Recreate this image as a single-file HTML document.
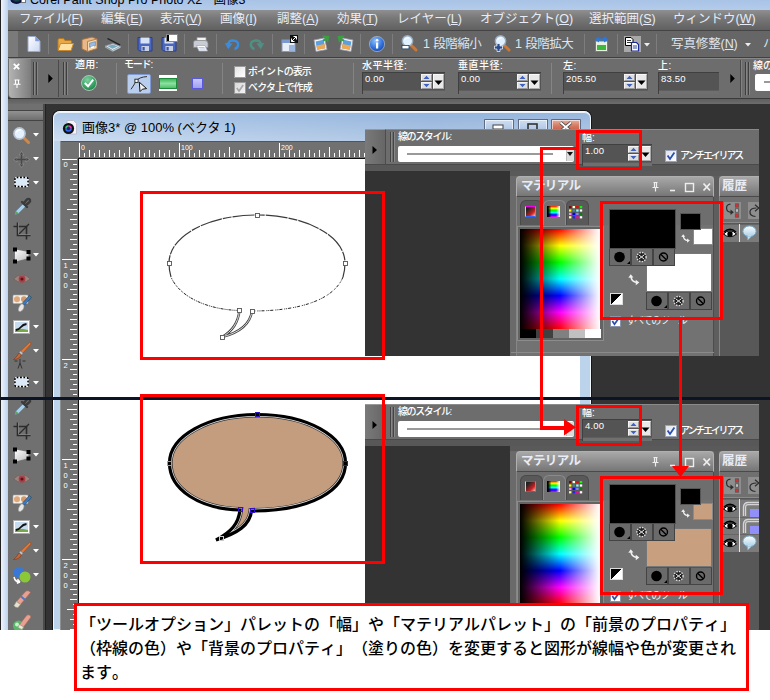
<!DOCTYPE html>
<html lang="ja"><head><meta charset="utf-8"><title>PSP</title>
<style>
html,body{margin:0;padding:0;background:#fff}
#r{position:relative;width:770px;height:700px;overflow:hidden;background:#fff;font-family:"Liberation Sans","Noto Sans CJK JP",sans-serif}
#r div{position:absolute;box-sizing:border-box}
#r svg{position:absolute;overflow:visible}
.t{white-space:nowrap;font-size:12px;line-height:20px;color:#dfe4ee}
.menu{font-size:12.5px;color:#e8ecf6}
.cap{text-spacing-trim:space-all;font-kerning:none;font-feature-settings:"palt" 0,"chws" 0,"halt" 0;white-space:nowrap;font-size:16px;line-height:24.3px;color:#000;font-weight:500;font-family:"Liberation Sans","Noto Sans CJK JP",sans-serif}
.s{white-space:nowrap;font-size:10px;line-height:12px;color:#f0f0f0}
.o{color:#fff;font-weight:500}
</style></head><body><div id="r">
<div style="left:0px;top:0px;width:770px;height:630px;background:#333333"></div>
<div style="left:0px;top:0px;width:770px;height:10px;background:linear-gradient(#a9c3e6,#b4cceb)"></div>
<div class="t" style="left:30px;top:-10px;font-size:12.5px;color:#000">Corel Paint Shop Pro Photo X2 <span style="opacity:0">-</span> 画像3</div>
<div style="left:10px;top:-8px;width:13px;height:12px;background:radial-gradient(circle at 50% 40%,#2a4,#114 60%,#000);border-radius:50%"></div>
<div style="left:21px;top:0px;width:5px;height:3px;background:#fff;border:1px solid #777;border-top:0"></div>
<div style="left:8px;top:10px;width:762px;height:20px;background:linear-gradient(#8f8f8f,#787878 40%,#606060)"></div>
<div class="t menu" style="left:19px;top:9px;letter-spacing:-0.35px">ファイル(<u>F</u>)</div>
<div class="t menu" style="left:101px;top:9px;">編集(<u>E</u>)</div>
<div class="t menu" style="left:160px;top:9px;">表示(<u>V</u>)</div>
<div class="t menu" style="left:220px;top:9px;">画像(<u>I</u>)</div>
<div class="t menu" style="left:277px;top:9px;">調整(<u>A</u>)</div>
<div class="t menu" style="left:337px;top:9px;">効果(<u>T</u>)</div>
<div class="t menu" style="left:397px;top:9px;">レイヤー(<u>L</u>)</div>
<div class="t menu" style="left:480px;top:9px;">オブジェクト(<u>O</u>)</div>
<div class="t menu" style="left:589px;top:9px;">選択範囲(<u>S</u>)</div>
<div class="t menu" style="left:673px;top:9px;">ウィンドウ(<u>W</u>)</div>
<div style="left:8px;top:30px;width:762px;height:28px;background:#666;border-top:1px solid #444;border-bottom:1px solid #404040;box-sizing:border-box"></div>
<div style="left:8px;top:31px;width:10px;height:26px;background:#7a7a7a"></div>
<div style="left:48px;top:34px;width:1px;height:20px;background:#7d7d7d"></div>
<div style="left:128px;top:34px;width:1px;height:20px;background:#7d7d7d"></div>
<div style="left:184px;top:34px;width:1px;height:20px;background:#7d7d7d"></div>
<div style="left:216px;top:34px;width:1px;height:20px;background:#7d7d7d"></div>
<div style="left:272px;top:34px;width:1px;height:20px;background:#7d7d7d"></div>
<div style="left:304px;top:34px;width:1px;height:20px;background:#7d7d7d"></div>
<div style="left:360px;top:34px;width:1px;height:20px;background:#7d7d7d"></div>
<div style="left:392px;top:34px;width:1px;height:20px;background:#7d7d7d"></div>
<div style="left:584px;top:34px;width:1px;height:20px;background:#7d7d7d"></div>
<div style="left:617px;top:34px;width:1px;height:20px;background:#7d7d7d"></div>
<div style="left:656px;top:34px;width:1px;height:20px;background:#7d7d7d"></div>
<svg style="left:27px;top:36px" width="14" height="16"><defs><linearGradient id="gdoc" x1="0" y1="0" x2="1" y2="1"><stop offset="0" stop-color="#fff"/><stop offset="1" stop-color="#c9d6f2"/></linearGradient></defs><path d="M1 0.5 H8.5 L13 5 V15.5 H1Z" fill="url(#gdoc)" stroke="#9aa8cc" stroke-width="1"/><path d="M8.5 0.5 V5 H13Z" fill="#7f9bd8" stroke="#8fa3d0" stroke-width=".6"/></svg>
<svg style="left:57px;top:36px" width="17" height="16"><path d="M1 4 Q1 2.5 2.5 2.5 H6.5 L8 4.5 H13.5 Q14.5 4.5 14.5 5.5 V14 H1Z" fill="#e8a848" stroke="#b87820" stroke-width="1"/><path d="M3.5 7.5 H16.5 L14 14.5 H1Z" fill="#ffe0a0" stroke="#c88830" stroke-width="1"/></svg>
<svg style="left:81px;top:36px" width="17" height="16"><path d="M1 3.5 L11 1 L16 3 V12.5 L6.5 15.5 L1 13Z" fill="#e8b888" stroke="#a87040" stroke-width="1"/><path d="M6.5 5.5 L16 3 V12.5 L6.5 15.5Z" fill="#f6d8b0" stroke="#a87040" stroke-width=".8"/><path d="M8.5 7.2 L14.5 5.6 V9.6 L8.5 11.2Z" fill="#9ab8e0" stroke="#58a" stroke-width=".6"/><path d="M10 10.8 L13 10 V11.5 L10 12.3Z" fill="#fff"/></svg>
<svg style="left:104px;top:36px" width="18" height="16"><path d="M4 2 L16.5 8.5 L15.5 9.5 L3 3Z" fill="#222"/><path d="M1 10 L9 7.5 L16.5 10.5 L8.5 14.5Z" fill="#dfe6ee" stroke="#889" stroke-width=".8"/><path d="M3.5 10 L9 8.4 L13.8 10.4 L8.3 12.8Z" fill="#7ab"/><path d="M1 10 V11.5 L8.5 15.8 V14.5Z" fill="#9aa"/><path d="M8.5 15.8 L16.5 11.8 V10.5 L8.5 14.5Z" fill="#bcc"/></svg>
<svg style="left:137px;top:36px" width="16" height="16"><path d="M1 1.5 H15 V15 H2.5 L1 13.5Z" fill="#4a68c0" stroke="#2a3c88" stroke-width="1"/><rect x="3.5" y="1.5" width="9" height="6" fill="#d8e2f6"/><rect x="4.5" y="10" width="7.5" height="5" fill="#c8d0e4"/><rect x="5.5" y="11" width="2.2" height="3.5" fill="#3a56a8"/></svg>
<svg style="left:161px;top:36px" width="16" height="16"><path d="M1 1.5 H15 V15 H2.5 L1 13.5Z" fill="#4a68c0" stroke="#2a3c88" stroke-width="1"/><rect x="3.5" y="1.5" width="9" height="6" fill="#d8e2f6"/><rect x="4.5" y="10" width="7.5" height="5" fill="#c8d0e4"/><rect x="5.5" y="11" width="2.2" height="3.5" fill="#3a56a8"/></svg>
<div style="left:166px;top:34px;width:12px;height:8px;background:#fff;border:1px solid #888"></div>
<div style="left:167px;top:35px;width:2px;height:6px;background:#000"></div>
<svg style="left:192px;top:36px" width="17" height="16"><path d="M5 1.5 H14 V7 H5Z" fill="#f4f4f4" stroke="#999" stroke-width=".8"/><path d="M1.5 6.5 Q1.5 4.5 3.5 4.5 H13 Q16 4.5 16 7.5 V11.5 H1.5Z" fill="#c8ccd4" stroke="#888" stroke-width=".8"/><path d="M4.5 9.5 H13 L15.5 15 H7Z" fill="#fff" stroke="#aab" stroke-width=".8"/><path d="M6.5 11.5 H12.5 M7.5 13 H13.5" stroke="#9be" stroke-width=".8"/></svg>
<svg style="left:224px;top:36px" width="17" height="16"><path d="M4.5 9 Q4 4.2 9.5 4.4 Q14.8 5 14 9.6 Q13.4 12.4 10.5 13" fill="none" stroke="#3c8cdc" stroke-width="2.5"/><path d="M0.8 7 L8.6 7.6 L4.2 13.2Z" fill="#3c8cdc"/></svg>
<svg style="left:248px;top:36px" width="17" height="16"><path d="M12.5 9 Q13 4.2 7.5 4.4 Q2.2 5 3 9.6 Q3.6 12.4 6.5 13" fill="none" stroke="#4f9084" stroke-width="2.5"/><path d="M16.2 7 L8.4 7.6 L12.8 13.2Z" fill="#4f9084"/></svg>
<svg style="left:281px;top:35px" width="17" height="17"><rect x="1" y="5" width="13" height="11.5" fill="#e8eef8" stroke="#8898b8" stroke-width="1"/><rect x="1" y="5" width="13" height="3" fill="#7a9ad0"/><rect x="8" y="10" width="6" height="6.5" fill="#9ab4dc"/><rect x="9" y="0" width="8" height="8" fill="#111"/><path d="M10.5 6.5 L15.5 1.5 M10.5 3.5 V6.5 H13.5 M12.5 1.5 H15.5 V4.5" stroke="#fff" stroke-width="1" fill="none"/></svg>
<svg style="left:313px;top:35px" width="17" height="17"><g><path d="M1 5 L11.5 3 L14 14.5 L3 16.5Z" fill="#f6f6f6" stroke="#99a" stroke-width=".8"/><path d="M2.6 6.4 L10.6 4.8 L12.3 13.2 L4.2 14.8Z" fill="#5aa0e0"/><path d="M3.4 10.5 L11.5 9 L12.3 13.2 L4.2 14.8Z" fill="#f0a850"/><path d="M9 0.5 L16.5 1 L15 8 L13.3 5.2 L10.5 6.5 L9.5 4.8 L12 3.4Z" fill="#38a040"/></g></svg>
<svg style="left:337px;top:35px" width="17" height="17"><g transform="translate(17 0) scale(-1 1)"><path d="M1 5 L11.5 3 L14 14.5 L3 16.5Z" fill="#f6f6f6" stroke="#99a" stroke-width=".8"/><path d="M2.6 6.4 L10.6 4.8 L12.3 13.2 L4.2 14.8Z" fill="#5aa0e0"/><path d="M3.4 10.5 L11.5 9 L12.3 13.2 L4.2 14.8Z" fill="#f0a850"/><path d="M9 0.5 L16.5 1 L15 8 L13.3 5.2 L10.5 6.5 L9.5 4.8 L12 3.4Z" fill="#38a040"/></g></svg>
<svg style="left:369px;top:36px" width="16" height="16"><defs><radialGradient id="ginfo" cx=".4" cy=".3" r=".8"><stop offset="0" stop-color="#8ec0ff"/><stop offset=".6" stop-color="#2f6fd8"/><stop offset="1" stop-color="#1c3f9c"/></radialGradient></defs><circle cx="8" cy="8" r="7.6" fill="url(#ginfo)" stroke="#bcd" stroke-width=".6"/><rect x="7" y="6.5" width="2.2" height="6" fill="#fff"/><circle cx="8.1" cy="4.2" r="1.3" fill="#fff"/></svg>
<svg style="left:401px;top:35px" width="17" height="18"><path d="M9.5 9.5 L15 15" stroke="#c87838" stroke-width="3" stroke-linecap="round"/><circle cx="6.5" cy="6" r="5.2" fill="#dff0ff" stroke="#9ab" stroke-width="1.4"/><path d="M3.5 5 Q5 2.5 8 2.8" stroke="#fff" stroke-width="1.2" fill="none"/><rect x="1" y="10.5" width="7" height="3.4" fill="#fff" stroke="#246" stroke-width=".8"/></svg>
<svg style="left:494px;top:35px" width="17" height="18"><path d="M9.5 9.5 L15 15" stroke="#c87838" stroke-width="3" stroke-linecap="round"/><circle cx="6.5" cy="6" r="5.2" fill="#dff0ff" stroke="#9ab" stroke-width="1.4"/><path d="M3.5 5 Q5 2.5 8 2.8" stroke="#fff" stroke-width="1.2" fill="none"/><path d="M3 8.5 H6 V11 H8.5 V14 H6 V16.5 H3 V14 H0.5 V11 H3Z" fill="#2a4c90" stroke="#fff" stroke-width=".7"/></svg>
<div class="t" style="left:423px;top:34px;font-size:12.5px;letter-spacing:-0.55px;word-spacing:1px">1 段階縮小</div>
<div class="t" style="left:515px;top:34px;font-size:12.5px;letter-spacing:-0.55px;word-spacing:1px">1 段階拡大</div>
<svg style="left:594px;top:36px" width="16" height="16"><rect x="1.5" y="5" width="12" height="10.5" fill="#e8f0e0" stroke="#686" stroke-width="1"/><rect x="3" y="9" width="9" height="5" fill="#3cb83c"/><path d="M1 3.5 L5 0.5 V2.5 H10 V0.5 L14.5 3.5 L10 6.5 V4.5 H5 V6.5Z" fill="#2a78e0"/></svg>
<div style="left:623.5px;top:35.5px;width:17px;height:16.5px;background:#a8a8a8"></div>
<svg style="left:624px;top:36px" width="16" height="16"><path d="M1.5 1.5 H7 L9 3.5 V9.5 H1.5Z" fill="#fff" stroke="#000" stroke-width="1"/><path d="M3 4.5 H7 M3 6.5 H7" stroke="#000" stroke-width=".8"/><path d="M7.5 6.5 H12.5 L14.5 8.5 V15 H7.5Z" fill="#fff" stroke="#1a2a90" stroke-width="1.2"/><path d="M9 10 H13 M9 12 H13" stroke="#1a2a90" stroke-width=".9"/></svg>
<svg style="left:644px;top:43px" width="6" height="4"><path d="M0 0 H6 L3 3.5Z" fill="#eee"/></svg>
<div class="t" style="left:671px;top:34px;font-size:12.5px;letter-spacing:-0.1px">写真修整(<u>N</u>)</div>
<svg style="left:745px;top:43px" width="6" height="4"><path d="M0 0 H6 L3 3.5Z" fill="#eee"/></svg>
<div class="t" style="left:763px;top:34px;">ハ</div>
<div style="left:8px;top:58px;width:762px;height:41px;background:#6d6d6d;border-top:1px solid #8a8a8a;border-bottom:1px solid #3a3a3a;box-sizing:border-box;border-radius:0 0 0 4px"></div>
<div style="left:9px;top:59px;width:22px;height:39px;background:linear-gradient(90deg,#b4b4b4,#7c7c7c);border-radius:0 0 0 4px"></div>
<div style="left:8px;top:99px;width:762px;height:5px;background:linear-gradient(#5f5f5f,#6c6c6c)"></div>
<svg style="left:13px;top:63px" width="7" height="7"><path d="M0.8 0.8 L6.2 6.2 M6.2 0.8 L0.8 6.2" stroke="#fff" stroke-width="1.8"/></svg>
<svg style="left:13px;top:79px" width="8" height="9"><path d="M1.5 1 H6.5 M2.5 1 V5 M5.5 1 V5 M0.5 5.3 H7.5 M4 5.5 V9" stroke="#fff" stroke-width="1.1" fill="none"/></svg>
<div style="left:33px;top:62px;width:1px;height:33px;background:#3e3e3e"></div>
<div style="left:34px;top:62px;width:1px;height:33px;background:#858585"></div>
<div style="left:36px;top:62px;width:1px;height:33px;background:#3e3e3e"></div>
<div style="left:37px;top:62px;width:1px;height:33px;background:#858585"></div>
<div style="left:63px;top:62px;width:1px;height:33px;background:#3e3e3e"></div>
<div style="left:64px;top:62px;width:1px;height:33px;background:#858585"></div>
<div style="left:66px;top:62px;width:1px;height:33px;background:#3e3e3e"></div>
<div style="left:67px;top:62px;width:1px;height:33px;background:#858585"></div>
<svg style="left:48px;top:74px" width="5" height="9"><path d="M0.3 0 L4.8 4.5 L0.3 9Z" fill="#000"/></svg>
<div style="left:58px;top:60px;width:1px;height:37px;background:#4a4a4a"></div>
<div style="left:116px;top:63px;width:1px;height:31px;background:#858585"></div>
<div style="left:222px;top:63px;width:1px;height:31px;background:#858585"></div>
<div style="left:353px;top:63px;width:1px;height:31px;background:#858585"></div>
<div style="left:551px;top:63px;width:1px;height:31px;background:#858585"></div>
<div class="s o" style="left:75px;top:59.3px;letter-spacing:0.3px">適用:</div>
<svg style="left:81px;top:75px" width="16" height="16"><defs><radialGradient id="gok" cx=".4" cy=".3" r=".8"><stop offset="0" stop-color="#7fd0a0"/><stop offset=".7" stop-color="#2f9a5c"/><stop offset="1" stop-color="#1c6c3c"/></radialGradient></defs><circle cx="8" cy="8" r="7.5" fill="url(#gok)" stroke="#b8d8c4" stroke-width=".8"/><path d="M3.8 8 L7 11.3 L12.2 4.6" fill="none" stroke="#fff" stroke-width="2"/></svg>
<div class="s o" style="left:124px;top:59.3px;letter-spacing:-1.2px">モード:</div>
<div style="left:127px;top:74px;width:24px;height:20px;background:#b9cdec;border:1px solid #7e9ad0;border-radius:2px"></div>
<svg style="left:130px;top:76px" width="18" height="16"><path d="M1 13.3 Q4 9 6.4 4.7 Q9.5 1 17 0.6" fill="none" stroke="#333" stroke-width="1"/><rect x="4.9" y="3.2" width="3.2" height="3.2" fill="#fff" stroke="#222" stroke-width=".9"/><path d="M9.3 6.2 L10 15.6 L12.4 13.2 L16.6 12.6Z" fill="#f4f4f4" stroke="#111" stroke-width="1"/></svg>
<div style="left:159px;top:75px;width:18px;height:16px;background:#fff"></div>
<div style="left:159px;top:77.5px;width:18px;height:11px;background:linear-gradient(#3cb85c,#8ee0a0 50%,#4cc06c);border:1.5px solid #1f8a3c"></div>
<div style="left:192px;top:78px;width:11px;height:11px;background:linear-gradient(#c8c8ff,#a0a0f0);border:1px solid #5a5ad8"></div>
<div style="left:234px;top:66px;width:12px;height:12px;background:linear-gradient(135deg,#e4e4e4,#fff);border:1px solid #9a9a9a"></div>
<div class="s o" style="left:248px;top:66px;letter-spacing:-1.05px">ポイントの表示</div>
<div style="left:234px;top:82px;width:12px;height:12px;background:linear-gradient(135deg,#d8d8d8,#f4f4f4);border:1px solid #9a9a9a"></div>
<svg style="left:234px;top:82px" width="12" height="12"><path d="M2.8 6 L5 9 L9.2 3" fill="none" stroke="#a8a8a8" stroke-width="1.7"/></svg>
<div class="s o" style="left:248px;top:82px;letter-spacing:-0.8px">ベクタ上で作成</div>
<div class="s o" style="left:362px;top:59.8px;letter-spacing:0.5px">水平半径:</div>
<div style="left:362px;top:72px;width:83px;height:22px;background:#545454;border-top:1px solid #404040;border-left:1px solid #404040"></div>
<div style="left:363px;top:90px;width:82px;height:4px;background:#6f6f6f;border-top:1px solid #5e5e5e"></div>
<div class="s" style="left:365px;top:73px;font-size:9.5px;line-height:12px;color:#fff;letter-spacing:0.2px">0.00</div>
<div style="left:421px;top:74.3px;width:11px;height:7px;background:#dedede;border:1px solid #f4f4f4;border-right-color:#9a9a9a;border-bottom-color:#9a9a9a"></div>
<div style="left:421px;top:82.3px;width:11px;height:7px;background:#dedede;border:1px solid #f4f4f4;border-right-color:#9a9a9a;border-bottom-color:#9a9a9a"></div>
<svg style="left:421px;top:74.3px" width="11" height="15"><path d="M2.5 5 L5.5 1.8 L8.5 5Z M2.5 10 L5.5 13.2 L8.5 10Z" fill="#4060c4"/></svg>
<div style="left:433.3px;top:74.0px;width:11px;height:15.3px;background:#e9e9e9;border:1px solid #fafafa;border-right-color:#aaa;border-bottom-color:#aaa"></div>
<svg style="left:433.3px;top:74.3px" width="11" height="15"><path d="M1.5 6.5 L9.5 6.5 L5.5 11Z" fill="#000"/></svg>
<div class="s o" style="left:458px;top:59.8px;letter-spacing:0.5px">垂直半径:</div>
<div style="left:458px;top:72px;width:83px;height:22px;background:#545454;border-top:1px solid #404040;border-left:1px solid #404040"></div>
<div style="left:459px;top:90px;width:82px;height:4px;background:#6f6f6f;border-top:1px solid #5e5e5e"></div>
<div class="s" style="left:461px;top:73px;font-size:9.5px;line-height:12px;color:#fff;letter-spacing:0.2px">0.00</div>
<div style="left:517px;top:74.3px;width:11px;height:7px;background:#dedede;border:1px solid #f4f4f4;border-right-color:#9a9a9a;border-bottom-color:#9a9a9a"></div>
<div style="left:517px;top:82.3px;width:11px;height:7px;background:#dedede;border:1px solid #f4f4f4;border-right-color:#9a9a9a;border-bottom-color:#9a9a9a"></div>
<svg style="left:517px;top:74.3px" width="11" height="15"><path d="M2.5 5 L5.5 1.8 L8.5 5Z M2.5 10 L5.5 13.2 L8.5 10Z" fill="#4060c4"/></svg>
<div style="left:529.3px;top:74.0px;width:11px;height:15.3px;background:#e9e9e9;border:1px solid #fafafa;border-right-color:#aaa;border-bottom-color:#aaa"></div>
<svg style="left:529.3px;top:74.3px" width="11" height="15"><path d="M1.5 6.5 L9.5 6.5 L5.5 11Z" fill="#000"/></svg>
<div class="s o" style="left:563px;top:59.8px;letter-spacing:0.5px">左:</div>
<div style="left:563px;top:72px;width:85px;height:22px;background:#545454;border-top:1px solid #404040;border-left:1px solid #404040"></div>
<div style="left:564px;top:90px;width:84px;height:4px;background:#6f6f6f;border-top:1px solid #5e5e5e"></div>
<div class="s" style="left:566px;top:73px;font-size:9.5px;line-height:12px;color:#fff;letter-spacing:0.2px">205.50</div>
<div style="left:624px;top:74.3px;width:11px;height:7px;background:#dedede;border:1px solid #f4f4f4;border-right-color:#9a9a9a;border-bottom-color:#9a9a9a"></div>
<div style="left:624px;top:82.3px;width:11px;height:7px;background:#dedede;border:1px solid #f4f4f4;border-right-color:#9a9a9a;border-bottom-color:#9a9a9a"></div>
<svg style="left:624px;top:74.3px" width="11" height="15"><path d="M2.5 5 L5.5 1.8 L8.5 5Z M2.5 10 L5.5 13.2 L8.5 10Z" fill="#4060c4"/></svg>
<div style="left:636.3px;top:74.0px;width:11px;height:15.3px;background:#e9e9e9;border:1px solid #fafafa;border-right-color:#aaa;border-bottom-color:#aaa"></div>
<svg style="left:636.3px;top:74.3px" width="11" height="15"><path d="M1.5 6.5 L9.5 6.5 L5.5 11Z" fill="#000"/></svg>
<div class="s o" style="left:658px;top:59.8px;letter-spacing:0.5px">上:</div>
<div style="left:658px;top:72px;width:61px;height:22px;background:#545454;border-top:1px solid #404040;border-left:1px solid #404040"></div>
<div style="left:659px;top:90px;width:60px;height:4px;background:#6f6f6f;border-top:1px solid #5e5e5e"></div>
<div class="s" style="left:661px;top:73px;font-size:9.5px;line-height:12px;color:#fff;letter-spacing:0.2px">83.50</div>
<svg style="left:730px;top:74px" width="5" height="9"><path d="M0.3 0 L4.8 4.5 L0.3 9Z" fill="#000"/></svg>
<div style="left:740px;top:60px;width:1px;height:37px;background:#4a4a4a"></div>
<div style="left:741px;top:60px;width:1px;height:37px;background:#828282"></div>
<div style="left:745px;top:62px;width:1px;height:33px;background:#3e3e3e"></div>
<div style="left:746px;top:62px;width:1px;height:33px;background:#858585"></div>
<div style="left:748px;top:62px;width:1px;height:33px;background:#3e3e3e"></div>
<div style="left:749px;top:62px;width:1px;height:33px;background:#858585"></div>
<div class="s o" style="left:753px;top:59.8px;">線のスタイル:</div>
<div style="left:755px;top:74px;width:20px;height:17px;background:#fff;border-radius:2px"></div>
<div style="left:764px;top:81px;width:10px;height:2px;background:#9a9a9a"></div>
<div style="left:8px;top:104px;width:36px;height:526px;background:#707070"></div>
<div style="left:8px;top:110px;width:36px;height:1px;background:#444"></div>
<div style="left:8px;top:111px;width:36px;height:9px;background:linear-gradient(#929292,#6e6e6e)"></div>
<div style="left:8px;top:120px;width:36px;height:1px;background:#444"></div>
<div style="left:43px;top:104px;width:2px;height:526px;background:#4a4a4a"></div>
<div style="left:45px;top:104px;width:1px;height:526px;background:#222"></div>
<svg style="left:0;top:0" width="0" height="0"><defs><linearGradient id="gdef" x1="0" y1="0" x2="1" y2="1"><stop offset="0" stop-color="#fff"/><stop offset="1" stop-color="#b8b8b8"/></linearGradient></defs></svg>
<svg style="left:12px;top:126px" width="19" height="19"><path d="M11 11 L16.5 16.5" stroke="#d08848" stroke-width="3" stroke-linecap="round"/><circle cx="7.5" cy="7.5" r="5.6" fill="#e4f2ff" stroke="#b8c4d0" stroke-width="1.6"/><path d="M4.2 6.5 Q5.5 3.6 9 3.8" stroke="#fff" stroke-width="1.3" fill="none"/></svg>
<svg style="left:33px;top:133px" width="6" height="4"><path d="M0 0 H6 L3 3.5Z" fill="#fff"/></svg>
<svg style="left:13px;top:151px" width="17" height="17"><path d="M8.5 0.5 L11 4 H6Z M8.5 16.5 L11 13 H6Z M0.5 8.5 L4 6 V11Z M16.5 8.5 L13 6 V11Z" fill="#484848" stroke="#9a9a9a" stroke-width=".6"/><path d="M8.5 4 V13 M4 8.5 H13" stroke="#484848" stroke-width="1.4"/></svg>
<svg style="left:33px;top:157px" width="6" height="4"><path d="M0 0 H6 L3 3.5Z" fill="#fff"/></svg>
<svg style="left:14px;top:176px" width="15" height="13"><rect x="1" y="1.5" width="13" height="9" rx="1.5" fill="#dceaf8" stroke="#000" stroke-width="1.4" stroke-dasharray="2 1.4"/><rect x="1" y="1.5" width="13" height="9" rx="1.5" fill="none" stroke="#fff" stroke-width="1.4" stroke-dasharray="1.4 2" stroke-dashoffset="-2"/></svg>
<svg style="left:33px;top:181px" width="6" height="4"><path d="M0 0 H6 L3 3.5Z" fill="#fff"/></svg>
<svg style="left:13px;top:197px" width="18" height="19"><path d="M2 17.5 L3 14 L10 7 L12.5 9.5 L5.5 16.5Z" fill="#a8d0e8" stroke="#68a" stroke-width=".7"/><path d="M2 17.5 L3.5 14.5 L6 16.5Z" fill="#5a5"/><path d="M9 5 L14 10 M10.5 6.5 L14 2.5 Q16 1 17 3 Q17.5 4.5 16 5.5 L12.5 8.5" stroke="#3a3a3a" stroke-width="2.4" fill="none" stroke-linecap="round"/></svg>
<svg style="left:13px;top:222px" width="18" height="18"><path d="M4.5 0.5 V13.5 H17.5 M0.5 4.5 H13.5 V17.5" fill="none" stroke="#2c2c2c" stroke-width="1.6"/><path d="M5 13 L16 2" stroke="#2c2c2c" stroke-width="1.2"/><path d="M5.5 0.5 V12.5 H17.5" fill="none" stroke="#999" stroke-width=".6"/></svg>
<svg style="left:12px;top:247px" width="20" height="17"><path d="M3 2.5 L16 5 L16.5 11 L3 14.5Z" fill="#f0f0f0" stroke="#888" stroke-width=".8"/><path d="M3 2.5 L16 5 L16.5 11 L3 14.5Z" fill="url(#gdef)"/><rect x="1" y="0.5" width="4" height="4" fill="#000"/><rect x="1" y="12.5" width="4" height="4" fill="#000"/><rect x="14.5" y="3" width="4" height="4" fill="#000"/><rect x="14.5" y="9.5" width="4" height="4" fill="#000"/></svg>
<svg style="left:33px;top:253px" width="6" height="4"><path d="M0 0 H6 L3 3.5Z" fill="#fff"/></svg>
<svg style="left:13px;top:273px" width="18" height="12"><path d="M0.5 6 Q9 -2.5 17.5 6 Q9 13 0.5 6Z" fill="#9c8480" stroke="#7a6460" stroke-width="1"/><circle cx="9" cy="6" r="3.4" fill="#a84048"/><circle cx="9" cy="6" r="1.6" fill="#601018"/></svg>
<svg style="left:12px;top:294px" width="20" height="19"><rect x="1" y="1" width="15" height="8.5" rx="1" fill="#f4f0e8" stroke="#aaa" stroke-width=".6"/><circle cx="5" cy="5.2" r="3" fill="#e0a878"/><circle cx="12" cy="5.2" r="3" fill="#d49868"/><path d="M17.5 1.5 L19.5 3.5 L12 11.5 L10 9.5Z" fill="#3a78c8" stroke="#245" stroke-width=".6"/><path d="M10 9.5 L12 11.5 Q12.5 15.5 8.5 17.5 Q5.5 18 6.5 14.5 Q7.5 11 10 9.5Z" fill="#e8e8e8" stroke="#999" stroke-width=".6"/></svg>
<svg style="left:13px;top:320px" width="17" height="14"><rect x="0.5" y="0.5" width="16" height="13" fill="#fff" stroke="#aaa" stroke-width="1"/><rect x="2" y="2" width="13" height="10" fill="#c8dcf0"/><path d="M2 12 V9 Q8 8 15 10 V12Z" fill="#78a848"/><path d="M3 10 Q6 9.5 8 7 Q10 4.5 13.5 4" fill="none" stroke="#111" stroke-width="1.8"/></svg>
<svg style="left:33px;top:325px" width="6" height="4"><path d="M0 0 H6 L3 3.5Z" fill="#fff"/></svg>
<svg style="left:12px;top:341px" width="20" height="21"><path d="M18 1 Q19.5 2 18.5 3.5 L11 12 L8.5 10Z" fill="#e07838" stroke="#a04818" stroke-width=".6"/><path d="M8.5 10 L11 12 L9.5 14 L7 12Z" fill="#b8c8d8" stroke="#789" stroke-width=".5"/><path d="M7 12 L9.5 14 Q7 18.5 1.5 18.5 Q5 16 7 12Z" fill="#c86838" stroke="#7a3818" stroke-width=".6"/></svg>
<svg style="left:33px;top:349px" width="6" height="4"><path d="M0 0 H6 L3 3.5Z" fill="#fff"/></svg>
<svg style="left:14px;top:359px" width="12" height="10"><path d="M6 0 V4 M0.5 2 H3.5 M8.5 2 H11.5 M6 4 L4 9.5 M6 4 L8 9.5" stroke="#333" stroke-width="1" fill="none"/></svg>
<svg style="left:14px;top:376px" width="15" height="13"><rect x="1" y="1.5" width="13" height="9" rx="1.5" fill="#dceaf8" stroke="#000" stroke-width="1.4" stroke-dasharray="2 1.4"/><rect x="1" y="1.5" width="13" height="9" rx="1.5" fill="none" stroke="#fff" stroke-width="1.4" stroke-dasharray="1.4 2" stroke-dashoffset="-2"/></svg>
<svg style="left:33px;top:381px" width="6" height="4"><path d="M0 0 H6 L3 3.5Z" fill="#fff"/></svg>
<svg style="left:13px;top:397px" width="18" height="19"><path d="M2 17.5 L3 14 L10 7 L12.5 9.5 L5.5 16.5Z" fill="#a8d0e8" stroke="#68a" stroke-width=".7"/><path d="M2 17.5 L3.5 14.5 L6 16.5Z" fill="#5a5"/><path d="M9 5 L14 10 M10.5 6.5 L14 2.5 Q16 1 17 3 Q17.5 4.5 16 5.5 L12.5 8.5" stroke="#3a3a3a" stroke-width="2.4" fill="none" stroke-linecap="round"/></svg>
<svg style="left:13px;top:422px" width="18" height="18"><path d="M4.5 0.5 V13.5 H17.5 M0.5 4.5 H13.5 V17.5" fill="none" stroke="#2c2c2c" stroke-width="1.6"/><path d="M5 13 L16 2" stroke="#2c2c2c" stroke-width="1.2"/><path d="M5.5 0.5 V12.5 H17.5" fill="none" stroke="#999" stroke-width=".6"/></svg>
<svg style="left:12px;top:447px" width="20" height="17"><path d="M3 2.5 L16 5 L16.5 11 L3 14.5Z" fill="#f0f0f0" stroke="#888" stroke-width=".8"/><path d="M3 2.5 L16 5 L16.5 11 L3 14.5Z" fill="url(#gdef)"/><rect x="1" y="0.5" width="4" height="4" fill="#000"/><rect x="1" y="12.5" width="4" height="4" fill="#000"/><rect x="14.5" y="3" width="4" height="4" fill="#000"/><rect x="14.5" y="9.5" width="4" height="4" fill="#000"/></svg>
<svg style="left:33px;top:453px" width="6" height="4"><path d="M0 0 H6 L3 3.5Z" fill="#fff"/></svg>
<svg style="left:13px;top:473px" width="18" height="12"><path d="M0.5 6 Q9 -2.5 17.5 6 Q9 13 0.5 6Z" fill="#9c8480" stroke="#7a6460" stroke-width="1"/><circle cx="9" cy="6" r="3.4" fill="#a84048"/><circle cx="9" cy="6" r="1.6" fill="#601018"/></svg>
<svg style="left:12px;top:494px" width="20" height="19"><rect x="1" y="1" width="15" height="8.5" rx="1" fill="#f4f0e8" stroke="#aaa" stroke-width=".6"/><circle cx="5" cy="5.2" r="3" fill="#e0a878"/><circle cx="12" cy="5.2" r="3" fill="#d49868"/><path d="M17.5 1.5 L19.5 3.5 L12 11.5 L10 9.5Z" fill="#3a78c8" stroke="#245" stroke-width=".6"/><path d="M10 9.5 L12 11.5 Q12.5 15.5 8.5 17.5 Q5.5 18 6.5 14.5 Q7.5 11 10 9.5Z" fill="#e8e8e8" stroke="#999" stroke-width=".6"/></svg>
<svg style="left:13px;top:520px" width="17" height="14"><rect x="0.5" y="0.5" width="16" height="13" fill="#fff" stroke="#aaa" stroke-width="1"/><rect x="2" y="2" width="13" height="10" fill="#c8dcf0"/><path d="M2 12 V9 Q8 8 15 10 V12Z" fill="#78a848"/><path d="M3 10 Q6 9.5 8 7 Q10 4.5 13.5 4" fill="none" stroke="#111" stroke-width="1.8"/></svg>
<svg style="left:33px;top:525px" width="6" height="4"><path d="M0 0 H6 L3 3.5Z" fill="#fff"/></svg>
<svg style="left:12px;top:541px" width="20" height="21"><path d="M18 1 Q19.5 2 18.5 3.5 L11 12 L8.5 10Z" fill="#e07838" stroke="#a04818" stroke-width=".6"/><path d="M8.5 10 L11 12 L9.5 14 L7 12Z" fill="#b8c8d8" stroke="#789" stroke-width=".5"/><path d="M7 12 L9.5 14 Q7 18.5 1.5 18.5 Q5 16 7 12Z" fill="#c86838" stroke="#7a3818" stroke-width=".6"/></svg>
<svg style="left:33px;top:549px" width="6" height="4"><path d="M0 0 H6 L3 3.5Z" fill="#fff"/></svg>
<svg style="left:12px;top:566px" width="20" height="19"><circle cx="7" cy="6.5" r="5.5" fill="#3a78d8"/><circle cx="13" cy="11" r="5.5" fill="#8ac838"/><path d="M2 11 Q3 16 8 16 M8 16 L5.5 13.2 M8 16 L4.8 17.2" stroke="#fff" stroke-width="1.5" fill="none"/></svg>
<svg style="left:33px;top:573px" width="6" height="4"><path d="M0 0 H6 L3 3.5Z" fill="#fff"/></svg>
<svg style="left:12px;top:590px" width="20" height="19"><path d="M14 1 Q17 0 18.5 2.5 L8.5 14.5 L4.5 11.5Z" fill="#e8a090" stroke="#a86858" stroke-width=".6"/><path d="M4.5 11.5 L8.5 14.5 L6 17.5 Q3 18 2 15.5Z" fill="#e8e0d0" stroke="#998" stroke-width=".6"/><path d="M9 6.5 L13 9.8" stroke="#4a78c8" stroke-width="2"/></svg>
<svg style="left:12px;top:614px" width="20" height="19"><circle cx="6.5" cy="12" r="5.5" fill="#58b868"/><circle cx="5" cy="10.5" r="2" fill="#c8f0d0"/><path d="M15 1 Q18 0 19 3 L11.5 13 L7.5 10.5Z" fill="#e8a090" stroke="#a86858" stroke-width=".6"/><path d="M7.5 10.5 L11.5 13 L10 15.5 L6 13.5Z" fill="#f0e8d8" stroke="#998" stroke-width=".5"/></svg>
<div style="left:0px;top:0px;width:1px;height:630px;background:#222"></div>
<div style="left:1px;top:0px;width:7px;height:630px;background:linear-gradient(90deg,#eef3fb,#dbe7f6 40%,#bcd3ec)"></div>
<div style="left:53px;top:111px;width:538px;height:519px;background:#bcd3ec;border-radius:7px 7px 0 0;box-shadow:0 0 0 1px #161616,inset 0 0 0 1px #f2f7fc"></div>
<div style="left:54px;top:112px;width:536px;height:29px;background:linear-gradient(rgba(130,170,220,.35),rgba(255,255,255,.18)),linear-gradient(90deg,#c6d8ee 0%,#b3cbe8 25%,#9fbbdd 70%,#a6c0e0 100%);border-radius:6px 6px 0 0;border-top:1px solid #eef4fb"></div>
<svg style="left:62px;top:120px" width="16" height="15"><path d="M5 0.5 H11.5 L14.5 3.5 V14 H5Z" fill="#f4f4fa" stroke="#b8b8c8" stroke-width=".8"/><circle cx="6.5" cy="8.5" r="5.6" fill="#111"/><circle cx="6.5" cy="8.5" r="3.3" fill="#226"/><path d="M4 8.5 A2.5 2.5 0 0 1 6.5 6" stroke="#2c6" stroke-width="1.6" fill="none"/><path d="M6.5 6 A2.5 2.5 0 0 1 9 8.5" stroke="#e3a" stroke-width="1.6" fill="none"/><path d="M9 8.5 A2.5 2.5 0 0 1 4 8.5" stroke="#36e" stroke-width="1.6" fill="none"/></svg>
<div class="t" style="left:82px;top:118px;font-size:13px;color:#000;line-height:20px">画像3* @ 100% (ベクタ 1)</div>
<div style="left:484px;top:119px;width:30px;height:14px;background:linear-gradient(#cfdff2,#a8c0e0);border:1px solid #5c6c84;border-radius:0 0 0 4px;box-shadow:inset 0 0 0 1px rgba(255,255,255,.6)"></div>
<div style="left:518px;top:119px;width:30px;height:14px;background:linear-gradient(#cfdff2,#a8c0e0);border:1px solid #5c6c84;border-radius:0;box-shadow:inset 0 0 0 1px rgba(255,255,255,.6)"></div>
<div style="left:551px;top:119px;width:30px;height:14px;background:linear-gradient(#e8b0a0,#d47860 50%,#c85840);border:1px solid #5c6c84;border-radius:0 0 4px 0;box-shadow:inset 0 0 0 1px rgba(255,255,255,.6)"></div>
<svg style="left:527px;top:123px" width="12" height="9"><rect x="1" y="1" width="9" height="8" fill="none" stroke="#333" stroke-width="1.6"/></svg>
<svg style="left:492px;top:124px" width="12" height="6"><rect x="1" y="1" width="10" height="4" fill="#fff" stroke="#444" stroke-width="1"/></svg>
<svg style="left:559px;top:122px" width="14" height="9"><path d="M1.5 0.5 L12 9.5 M12 0.5 L1.5 9.5" stroke="#444" stroke-width="3.4"/><path d="M1.5 0.5 L12 9.5 M12 0.5 L1.5 9.5" stroke="#fff" stroke-width="1.8"/></svg>
<div style="left:60px;top:141px;width:520px;height:489px;background:#717171"></div>
<div style="left:60px;top:141px;width:520px;height:1px;background:#555"></div>
<div style="left:60px;top:141px;width:1px;height:489px;background:#909090"></div>
<div style="left:78px;top:158px;width:502px;height:472px;background:#fff;border-left:1px solid #111;border-top:1px solid #111"></div>
<svg style="left:0;top:0" width="580" height="160"><path d="M79.5 143 V157 M84.5 153 V157 M89.5 150 V157 M94.5 153 V157 M99.5 150 V157 M104.5 153 V157 M109.5 150 V157 M114.5 153 V157 M119.5 150 V157 M124.5 153 V157 M129.5 147 V157 M134.5 153 V157 M139.5 150 V157 M144.5 153 V157 M149.5 150 V157 M154.5 153 V157 M159.5 150 V157 M164.5 153 V157 M169.5 150 V157 M174.5 153 V157 M179.5 143 V157 M184.5 153 V157 M189.5 150 V157 M194.5 153 V157 M199.5 150 V157 M204.5 153 V157 M209.5 150 V157 M214.5 153 V157 M219.5 150 V157 M224.5 153 V157 M229.5 147 V157 M234.5 153 V157 M239.5 150 V157 M244.5 153 V157 M249.5 150 V157 M254.5 153 V157 M259.5 150 V157 M264.5 153 V157 M269.5 150 V157 M274.5 153 V157 M279.5 143 V157 M284.5 153 V157 M289.5 150 V157 M294.5 153 V157 M299.5 150 V157 M304.5 153 V157 M309.5 150 V157 M314.5 153 V157 M319.5 150 V157 M324.5 153 V157 M329.5 147 V157 M334.5 153 V157 M339.5 150 V157 M344.5 153 V157 M349.5 150 V157 M354.5 153 V157 M359.5 150 V157 M364.5 153 V157 M369.5 150 V157 M374.5 153 V157 M379.5 143 V157 M384.5 153 V157 M389.5 150 V157 M394.5 153 V157 M399.5 150 V157 M404.5 153 V157 M409.5 150 V157 M414.5 153 V157 M419.5 150 V157 M424.5 153 V157 M429.5 147 V157 M434.5 153 V157 M439.5 150 V157 M444.5 153 V157 M449.5 150 V157 M454.5 153 V157 M459.5 150 V157 M464.5 153 V157 M469.5 150 V157 M474.5 153 V157 M479.5 143 V157 M484.5 153 V157 M489.5 150 V157 M494.5 153 V157 M499.5 150 V157 M504.5 153 V157 M509.5 150 V157 M514.5 153 V157 M519.5 150 V157 M524.5 153 V157 M529.5 147 V157 M534.5 153 V157 M539.5 150 V157 M544.5 153 V157 M549.5 150 V157 M554.5 153 V157 M559.5 150 V157 M564.5 153 V157 M569.5 150 V157 M574.5 153 V157 M579.5 143 V157" stroke="#fff" stroke-width="1" fill="none" shape-rendering="crispEdges"/></svg>
<div class="s" style="left:81px;top:142.5px;font-size:7px;line-height:9px;color:#fff">0</div>
<div class="s" style="left:181px;top:142.5px;font-size:7px;line-height:9px;color:#fff">100</div>
<div class="s" style="left:281px;top:142.5px;font-size:7px;line-height:9px;color:#fff">200</div>
<div class="s" style="left:381px;top:142.5px;font-size:7px;line-height:9px;color:#fff">300</div>
<div class="s" style="left:481px;top:142.5px;font-size:7px;line-height:9px;color:#fff">400</div>
<svg style="left:0;top:0" width="80" height="630"><path d="M62 159.5 H77 M73 164.5 H77 M70 169.5 H77 M73 174.5 H77 M70 179.5 H77 M73 184.5 H77 M70 189.5 H77 M73 194.5 H77 M70 199.5 H77 M73 204.5 H77 M67 209.5 H77 M73 214.5 H77 M70 219.5 H77 M73 224.5 H77 M70 229.5 H77 M73 234.5 H77 M70 239.5 H77 M73 244.5 H77 M70 249.5 H77 M73 254.5 H77 M62 259.5 H77 M73 264.5 H77 M70 269.5 H77 M73 274.5 H77 M70 279.5 H77 M73 284.5 H77 M70 289.5 H77 M73 294.5 H77 M70 299.5 H77 M73 304.5 H77 M67 309.5 H77 M73 314.5 H77 M70 319.5 H77 M73 324.5 H77 M70 329.5 H77 M73 334.5 H77 M70 339.5 H77 M73 344.5 H77 M70 349.5 H77 M73 354.5 H77 M62 359.5 H77 M73 364.5 H77 M70 369.5 H77 M73 374.5 H77 M70 379.5 H77 M73 384.5 H77 M70 389.5 H77 M73 394.5 H77 M73 404.5 H77 M67 409.5 H77 M73 414.5 H77 M70 419.5 H77 M73 424.5 H77 M70 429.5 H77 M73 434.5 H77 M70 439.5 H77 M73 444.5 H77 M70 449.5 H77 M73 454.5 H77 M62 459.5 H77 M73 464.5 H77 M70 469.5 H77 M73 474.5 H77 M70 479.5 H77 M73 484.5 H77 M70 489.5 H77 M73 494.5 H77 M70 499.5 H77 M73 504.5 H77 M67 509.5 H77 M73 514.5 H77 M70 519.5 H77 M73 524.5 H77 M70 529.5 H77 M73 534.5 H77 M70 539.5 H77 M73 544.5 H77 M70 549.5 H77 M73 554.5 H77 M62 559.5 H77 M73 564.5 H77 M70 569.5 H77 M73 574.5 H77 M70 579.5 H77 M73 584.5 H77 M70 589.5 H77 M73 594.5 H77 M70 599.5 H77 M73 604.5 H77 M67 609.5 H77 M73 614.5 H77 M70 619.5 H77 M73 624.5 H77 M70 629.5 H77" stroke="#fff" stroke-width="1" fill="none" shape-rendering="crispEdges"/></svg>
<div class="s" style="left:63.5px;top:160px;font-size:7.5px;line-height:9px;color:#fff">0</div>
<div class="s" style="left:63.5px;top:260.5px;font-size:7.5px;line-height:9px;color:#fff">1</div>
<div class="s" style="left:63.5px;top:270.5px;font-size:7.5px;line-height:9px;color:#fff">0</div>
<div class="s" style="left:63.5px;top:280.5px;font-size:7.5px;line-height:9px;color:#fff">0</div>
<div class="s" style="left:63.5px;top:360.5px;font-size:7.5px;line-height:9px;color:#fff">2</div>
<div class="s" style="left:63.5px;top:460.5px;font-size:7.5px;line-height:9px;color:#fff">1</div>
<div class="s" style="left:63.5px;top:470.5px;font-size:7.5px;line-height:9px;color:#fff">0</div>
<div class="s" style="left:63.5px;top:480.5px;font-size:7.5px;line-height:9px;color:#fff">0</div>
<div class="s" style="left:63.5px;top:560.5px;font-size:7.5px;line-height:9px;color:#fff">2</div>
<div class="s" style="left:63.5px;top:570.5px;font-size:7.5px;line-height:9px;color:#fff">0</div>
<div class="s" style="left:63.5px;top:580.5px;font-size:7.5px;line-height:9px;color:#fff">0</div>
<div style="left:0px;top:397px;width:770px;height:3px;background:#0d1426"></div>
<svg style="left:0;top:0" width="400" height="600"><path d="M171 277 C169.600 272.500 169 268 169 263 C169 236 208 215 257 215 C306 215 345 236 345 263 C345 268 344.300 272.500 343 277" fill="none" stroke="#3a3a3a" stroke-width="1.2" stroke-dasharray="22 1 9 1"/><path d="M239.5 310.5 C206 309.600 179 296 171 277" fill="none" stroke="#222" stroke-width="1" stroke-dasharray="3 1 1 1 1 1"/><path d="M343 277 C335 297 306 311 252 311" fill="none" stroke="#222" stroke-width="1" stroke-dasharray="3 1 1 1 1 2"/><path d="M239.5 310.5 C238 324 231 332 222 337 C238 333 250 325 252 311" fill="none" stroke="#444" stroke-width="2.4"/><path d="M239.5 310.5 C238 324 231 332 222 337 C238 333 250 325 252 311" fill="none" stroke="#fff" stroke-width="0.8"/><rect x="255.5" y="213.5" width="4" height="4" fill="#fff" stroke="#555" stroke-width="0.9"/><rect x="167.5" y="261.5" width="4" height="4" fill="#fff" stroke="#555" stroke-width="0.9"/><rect x="343.5" y="261.5" width="4" height="4" fill="#fff" stroke="#555" stroke-width="0.9"/><rect x="237.5" y="308.5" width="4" height="4" fill="#fff" stroke="#555" stroke-width="0.9"/><rect x="250.5" y="309.5" width="4" height="4" fill="#fff" stroke="#555" stroke-width="0.9"/><rect x="220.5" y="335.5" width="4" height="4" fill="#fff" stroke="#555" stroke-width="0.9"/><defs><clipPath id="cpe"><path d="M240 510 C200 509 169.5 490 169.5 463 C169.5 436 208 414.5 257.5 414.5 C307 414.5 345.5 436 345.5 463 C345.5 490 312 511 251.5 511 C250 525 238 533 216 540 C231 532 238.5 524 240 510Z"/></clipPath></defs><path d="M240 510 C200 509 169.5 490 169.5 463 C169.5 436 208 414.5 257.5 414.5 C307 414.5 345.5 436 345.5 463 C345.5 490 312 511 251.5 511 C250 525 238 533 216 540 C231 532 238.5 524 240 510Z" fill="#c49c7e"/><path d="M240 510 C200 509 169.5 490 169.5 463 C169.5 436 208 414.5 257.5 414.5 C307 414.5 345.5 436 345.5 463 C345.5 490 312 511 251.5 511 C250 525 238 533 216 540 C231 532 238.5 524 240 510Z" fill="none" stroke="#3a3a3a" stroke-width="6.2" clip-path="url(#cpe)"/><path d="M240 510 C200 509 169.5 490 169.5 463 C169.5 436 208 414.5 257.5 414.5 C307 414.5 345.5 436 345.5 463 C345.5 490 312 511 251.5 511 C250 525 238 533 216 540 C231 532 238.5 524 240 510Z" fill="none" stroke="#e4e4e4" stroke-width="4.6" clip-path="url(#cpe)"/><path d="M240 510 C200 509 169.5 490 169.5 463 C169.5 436 208 414.5 257.5 414.5 C307 414.5 345.5 436 345.5 463 C345.5 490 312 511 251.5 511 C250 525 238 533 216 540 C231 532 238.5 524 240 510Z" fill="none" stroke="#000" stroke-width="3.2" stroke-linejoin="miter"/><rect x="255.5" y="412.5" width="4" height="4" fill="none" stroke="#31c" stroke-width="1"/><rect x="167.5" y="461.5" width="4" height="4" fill="none" stroke="#3cc" stroke-width="1"/><rect x="343.5" y="461.5" width="4" height="4" fill="none" stroke="#31c" stroke-width="1"/><rect x="238.5" y="507.5" width="4" height="4" fill="none" stroke="#31c" stroke-width="1"/><rect x="250.5" y="508.5" width="4" height="4" fill="none" stroke="#31c" stroke-width="1"/><rect x="219.5" y="536.5" width="4" height="4" fill="none" stroke="#ccc" stroke-width="1"/></svg>
<div style="left:365px;top:129px;width:394px;height:227px;background:#333;overflow:hidden"></div>
<div style="left:365px;top:129px;width:394px;height:35px;background:#6d6d6d;border-top:1px solid #8a8a8a"></div>
<div style="left:365px;top:164px;width:394px;height:7px;background:#585858;border-top:1px solid #4a4a4a"></div>
<div style="left:365px;top:129px;width:21px;height:35px;background:linear-gradient(90deg,#7a7a7a,#666);border-right:1px solid #4c4c4c;border-top:1px solid #999"></div>
<svg style="left:372px;top:146px" width="6" height="8"><path d="M0.5 0 L5 4 L0.5 8Z" fill="#000"/></svg>
<div style="left:390px;top:132px;width:1px;height:30px;background:#444"></div>
<div style="left:391px;top:132px;width:1px;height:30px;background:#888"></div>
<div style="left:393px;top:132px;width:1px;height:30px;background:#444"></div>
<div style="left:394px;top:132px;width:1px;height:30px;background:#888"></div>
<div class="s o" style="left:398px;top:130.5px;letter-spacing:-1.4px">線のスタイル:</div>
<div style="left:398px;top:146px;width:176px;height:16px;background:#fff;border-radius:2px"></div>
<div style="left:407px;top:153px;width:146px;height:2px;background:#9a9a9a"></div>
<div style="left:566px;top:147px;width:8px;height:14px;background:#dcdcdc;border-left:1px solid #bbb"></div>
<svg style="left:566px;top:147px" width="8" height="14"><path d="M1 5 L7 5 L4 9Z" fill="#111"/></svg>
<div class="s o" style="left:582px;top:131.5px;">幅:</div>
<div style="left:582px;top:144px;width:70px;height:22px;background:#545454;border-top:1px solid #404040;border-left:1px solid #404040"></div>
<div style="left:583px;top:162px;width:69px;height:4px;background:#6f6f6f;border-top:1px solid #5e5e5e"></div>
<div class="s" style="left:585px;top:145px;font-size:9.5px;line-height:12px;color:#fff;letter-spacing:0.2px">1.00</div>
<div style="left:628px;top:146.3px;width:11px;height:7px;background:#dedede;border:1px solid #f4f4f4;border-right-color:#9a9a9a;border-bottom-color:#9a9a9a"></div>
<div style="left:628px;top:154.3px;width:11px;height:7px;background:#dedede;border:1px solid #f4f4f4;border-right-color:#9a9a9a;border-bottom-color:#9a9a9a"></div>
<svg style="left:628px;top:146.3px" width="11" height="15"><path d="M2.5 5 L5.5 1.8 L8.5 5Z M2.5 10 L5.5 13.2 L8.5 10Z" fill="#4060c4"/></svg>
<div style="left:640.3px;top:146.0px;width:11px;height:15.3px;background:#e9e9e9;border:1px solid #fafafa;border-right-color:#aaa;border-bottom-color:#aaa"></div>
<svg style="left:640.3px;top:146.3px" width="11" height="15"><path d="M1.5 6.5 L9.5 6.5 L5.5 11Z" fill="#000"/></svg>
<div style="left:665px;top:150px;width:12px;height:12px;background:linear-gradient(135deg,#dfe3ea,#fff);border:1px solid #9aa3b8"></div>
<svg style="left:665px;top:150px" width="12" height="12"><path d="M2.6 5.5 L5 9 L9.4 2.6" fill="none" stroke="#2a4fb0" stroke-width="1.8"/></svg>
<div class="s o" style="left:680px;top:149.5px;letter-spacing:-2.2px">アンチエイリアス</div>
<div style="left:510px;top:171px;width:249px;height:185px;background:#6a6a6a"></div>
<div style="left:714px;top:171px;width:5px;height:185px;background:#5e5e5e"></div>
<div style="left:510px;top:171px;width:249px;height:5px;background:#5a5a5a"></div>
<div style="left:516px;top:176px;width:198px;height:21px;background:linear-gradient(#a8a8a8,#767676);border-radius:4px 4px 0 0;border:1px solid #b0b0b0;border-bottom:1px solid #4a4a4a"></div>
<div class="t" style="left:521px;top:176px;font-size:12.5px;font-weight:bold;line-height:21px;color:#e8ecf6;letter-spacing:-0.6px">マテリアル</div>
<svg style="left:650px;top:180px" width="62" height="14"><path d="M3.5 2.5 L7.5 2.5 M4.5 2.5 L4.5 7 M6.5 2.5 L6.5 7 M2.5 7.5 L8.5 7.5 M5.5 7.5 L5.5 11.5" stroke="#eee" stroke-width="1.2" fill="none"/><path d="M20 10.5 L25 10.5" stroke="#eee" stroke-width="1.6"/><rect x="35.5" y="3.5" width="8" height="8" fill="none" stroke="#eee" stroke-width="1.4"/><path d="M53.5 3.5 L60 10.5 M60 3.5 L53.5 10.5" stroke="#eee" stroke-width="1.8"/></svg>
<div style="left:516px;top:197px;width:198px;height:159px;background:#727272;border-left:1px solid #868686;border-right:1px solid #4c4c4c"></div>
<div style="left:517px;top:197px;width:196px;height:28px;background:#6e6e6e"></div>
<div style="left:520px;top:200px;width:22.5px;height:25px;background:#595959;border-radius:6px 6px 0 0;border:1px solid #4a4a4a;border-bottom:0"></div>
<div style="left:543px;top:200px;width:22.5px;height:25px;background:#727272;border-radius:6px 6px 0 0;border:1px solid #8a8a8a;border-bottom:0"></div>
<div style="left:566px;top:200px;width:22.5px;height:25px;background:#595959;border-radius:6px 6px 0 0;border:1px solid #4a4a4a;border-bottom:0"></div>
<div style="left:525px;top:206px;width:11px;height:11px;background:linear-gradient(135deg,#222 20%,#c22 70%,#fbb);border:1.5px solid;border-color:#e0e #3c3 #36f #fd0"></div>
<div style="left:547px;top:206px;width:13px;height:11px;background:linear-gradient(90deg,#000 8%,rgba(0,0,0,0) 35%,rgba(255,255,255,0) 70%,#fff 100%),linear-gradient(#f00,#ff0,#0f0,#0ff,#00f,#f0f)"></div>
<svg style="left:569px;top:206px" width="14" height="13"><rect x="0.0" y="0.0" width="2.4" height="2.2" fill="#800"/><rect x="3.6" y="0.0" width="2.4" height="2.2" fill="#ffc"/><rect x="7.2" y="0.0" width="2.4" height="2.2" fill="#f00"/><rect x="10.8" y="0.0" width="2.4" height="2.2" fill="#0f0"/><rect x="0.0" y="3.4" width="2.4" height="2.2" fill="#ff0"/><rect x="3.6" y="3.4" width="2.4" height="2.2" fill="#488"/><rect x="7.2" y="3.4" width="2.4" height="2.2" fill="#8ff"/><rect x="10.8" y="3.4" width="2.4" height="2.2" fill="#fff"/><rect x="0.0" y="6.8" width="2.4" height="2.2" fill="#f8f"/><rect x="3.6" y="6.8" width="2.4" height="2.2" fill="#00f"/><rect x="7.2" y="6.8" width="2.4" height="2.2" fill="#88f"/><rect x="10.8" y="6.8" width="2.4" height="2.2" fill="#080"/><rect x="0.0" y="10.2" width="2.4" height="2.2" fill="#ff8"/><rect x="3.6" y="10.2" width="2.4" height="2.2" fill="#22f"/><rect x="7.2" y="10.2" width="2.4" height="2.2" fill="#f0a"/><rect x="10.8" y="10.2" width="2.4" height="2.2" fill="#fff"/></svg>
<div style="left:516.5px;top:225.5px;width:87.5px;height:115px;background:#636363;border:1px solid #8c8c8c"></div>
<div style="left:520px;top:229px;width:80px;height:100px;background:linear-gradient(to right,#000 0%,rgba(0,0,0,0) 50%,rgba(255,255,255,0) 50%,#fff 100%),linear-gradient(to bottom,#f00 0%,#ff0 16.7%,#0f0 33.3%,#0ff 50%,#00f 66.7%,#f0f 83.3%,#f00 100%)"></div>
<div style="left:520.0px;top:329px;width:16.3px;height:8.5px;background:#000"></div>
<div style="left:536.3px;top:329px;width:16.3px;height:8.5px;background:#404040"></div>
<div style="left:552.6px;top:329px;width:16.3px;height:8.5px;background:#808080"></div>
<div style="left:568.9px;top:329px;width:16.3px;height:8.5px;background:#c0c0c0"></div>
<div style="left:585.2px;top:329px;width:16px;height:8.5px;background:#fff"></div>
<div style="left:609px;top:209px;width:66px;height:40px;background:#000;border:1px solid #555"></div>
<div style="left:609px;top:248px;width:22px;height:17.5px;background:#6a6a6a;border:1px solid #444;border-top-color:#555"></div>
<div style="left:631px;top:248px;width:22px;height:17.5px;background:#6a6a6a;border:1px solid #444;border-top-color:#555"></div>
<div style="left:653px;top:248px;width:21.6px;height:17.5px;background:#6a6a6a;border:1px solid #444;border-top-color:#555"></div>
<svg style="left:609px;top:248px" width="66" height="18"><circle cx="10.5" cy="9" r="5.3" fill="#000"/><path d="M18 16 L21 16 L21 13Z" fill="#000"/><circle cx="32.5" cy="9" r="4.6" fill="#222" stroke="#ddd" stroke-width="1.4" stroke-dasharray="1.5 1.2"/><path d="M30 7 L35 11 M35 7 L30 11" stroke="#eee" stroke-width="1" /><circle cx="54.5" cy="9" r="4" fill="none" stroke="#000" stroke-width="1.4"/><path d="M51.7 6.2 L57.3 11.8" stroke="#000" stroke-width="1.4"/></svg>
<div style="left:646px;top:253px;width:66px;height:39px;background:#ffffff;border:1px solid #777"></div>
<div style="left:646px;top:292px;width:22px;height:17.5px;background:#6a6a6a;border:1px solid #444;border-top-color:#555"></div>
<div style="left:668px;top:292px;width:22px;height:17.5px;background:#6a6a6a;border:1px solid #444;border-top-color:#555"></div>
<div style="left:690px;top:292px;width:21.6px;height:17.5px;background:#6a6a6a;border:1px solid #444;border-top-color:#555"></div>
<svg style="left:646px;top:292px" width="66" height="18"><circle cx="10.5" cy="9" r="5.3" fill="#000"/><path d="M18 16 L21 16 L21 13Z" fill="#000"/><circle cx="32.5" cy="9" r="4.6" fill="#222" stroke="#ddd" stroke-width="1.4" stroke-dasharray="1.5 1.2"/><path d="M30 7 L35 11 M35 7 L30 11" stroke="#eee" stroke-width="1" /><circle cx="54.5" cy="9" r="4" fill="none" stroke="#000" stroke-width="1.4"/><path d="M51.7 6.2 L57.3 11.8" stroke="#000" stroke-width="1.4"/></svg>
<div style="left:609px;top:248px;width:22px;height:17.5px;background:#6a6a6a;border:1px solid #444;border-top-color:#555"></div>
<div style="left:631px;top:248px;width:22px;height:17.5px;background:#6a6a6a;border:1px solid #444;border-top-color:#555"></div>
<div style="left:653px;top:248px;width:21.6px;height:17.5px;background:#6a6a6a;border:1px solid #444;border-top-color:#555"></div>
<svg style="left:609px;top:248px" width="66" height="18"><circle cx="10.5" cy="9" r="5.3" fill="#000"/><path d="M18 16 L21 16 L21 13Z" fill="#000"/><circle cx="32.5" cy="9" r="4.6" fill="#222" stroke="#ddd" stroke-width="1.4" stroke-dasharray="1.5 1.2"/><path d="M30 7 L35 11 M35 7 L30 11" stroke="#eee" stroke-width="1" /><circle cx="54.5" cy="9" r="4" fill="none" stroke="#000" stroke-width="1.4"/><path d="M51.7 6.2 L57.3 11.8" stroke="#000" stroke-width="1.4"/></svg>
<div style="left:609px;top:209px;width:66.5px;height:39.5px;background:#000;border:1px solid #505050"></div>
<div style="left:692.5px;top:227.5px;width:20px;height:17px;background:#ffffff;border:1px solid #8a8a8a"></div>
<div style="left:680px;top:213px;width:21px;height:17px;background:#000;border:1px solid #555"></div>
<svg style="left:680.5px;top:234px" width="9.02" height="9.02" viewBox="0 0 11 11"><path d="M2.8 2 Q3 7.5 8.5 8" fill="none" stroke="#f0f0f0" stroke-width="1.4"/><path d="M0.3 3.6 L2.6 0.2 L5.2 3.4Z M7.4 5.4 L10.8 8 L7.4 10.6Z" fill="#f0f0f0"/></svg>
<svg style="left:628px;top:273.5px" width="11.55" height="11.55" viewBox="0 0 11 11"><path d="M2.8 2 Q3 7.5 8.5 8" fill="none" stroke="#f0f0f0" stroke-width="1.4"/><path d="M0.3 3.6 L2.6 0.2 L5.2 3.4Z M7.4 5.4 L10.8 8 L7.4 10.6Z" fill="#f0f0f0"/></svg>
<div style="left:610px;top:293px;width:13px;height:12px;background:linear-gradient(135deg,#000 50%,#fff 50%);border:1px solid #ddd"></div>
<div style="left:610px;top:316px;width:11px;height:11px;background:#fff;border:1px solid #8a93a8"></div>
<svg style="left:610px;top:316px" width="11" height="11"><path d="M2.3 5 L4.5 8.2 L8.7 2.3" fill="none" stroke="#2a4fb0" stroke-width="1.7"/></svg>
<div class="s" style="left:626px;top:315px;letter-spacing:-1.2px">すべてのツール</div>
<div style="left:511px;top:352px;width:203px;height:1px;background:#8a8a8a"></div>
<div style="left:719px;top:176px;width:40px;height:21px;background:linear-gradient(#a8a8a8,#767676);border-radius:4px 0 0 0;border:1px solid #b0b0b0;border-right:0;border-bottom:1px solid #4a4a4a"></div>
<div class="t" style="left:722px;top:176px;font-size:12.5px;font-weight:bold;line-height:21px;color:#e8ecf6">履歴</div>
<div style="left:719px;top:197px;width:40px;height:159px;background:#585858;border-left:1px solid #868686"></div>
<div style="left:720px;top:197px;width:39px;height:26px;background:#707070"></div>
<div style="left:724px;top:202px;width:16.5px;height:16.5px;background:#8e8e8e"></div>
<svg style="left:724px;top:202px" width="17" height="17"><path d="M6.5 2.2 Q2.2 2.5 2.6 6.5 Q3 10.3 7.5 10.3" fill="none" stroke="#2c2c2c" stroke-width="1.2"/><path d="M6.5 7.6 L9.8 10.3 L6.5 13Z" fill="#2c2c2c"/><rect x="11.3" y="1.8" width="3.4" height="3.4" fill="#d83030" stroke="#555" stroke-width=".7"/><rect x="11.3" y="6.8" width="3.4" height="3.4" fill="#bbb" stroke="#444" stroke-width=".7"/><rect x="11.3" y="11.8" width="3.4" height="3.4" fill="#d83030" stroke="#555" stroke-width=".7"/></svg>
<div style="left:748px;top:202px;width:11px;height:16.5px;background:#8e8e8e"></div>
<svg style="left:748px;top:202px" width="11" height="17"><path d="M7.5 14.5 Q1.5 14 2 9.5 Q2.5 6 8.5 6" fill="none" stroke="#2c2c2c" stroke-width="1.2"/><path d="M7 2.8 L10.8 6 L7 9.2" fill="none" stroke="#2c2c2c" stroke-width="1.2"/></svg>
<div style="left:720px;top:222px;width:39px;height:1px;background:#8a8a8a"></div>
<div style="left:722px;top:224.3px;width:17px;height:17.5px;background:#787878;border-top:1px solid #666"></div>
<div style="left:739px;top:224.3px;width:1px;height:17.5px;background:#e8e8e8"></div>
<div style="left:740px;top:224.3px;width:19px;height:17.5px;background:#7b7b7b;border-top:1px solid #666"></div>
<svg style="left:723.3px;top:228.8px" width="14" height="10"><path d="M0.5 5 Q7 -1.5 13.5 5 Q7 10.5 0.5 5Z" fill="#fff" stroke="#000" stroke-width="1"/><circle cx="7" cy="4.9" r="2.7" fill="#000"/><path d="M1 3 Q7 -2.6 13 3" stroke="#000" stroke-width="1.5" fill="none"/></svg>
<svg style="left:742px;top:225.3px" width="16" height="16"><defs><linearGradient id="gbub0" x1="0" y1="0" x2="0" y2="1"><stop offset="0" stop-color="#fff"/><stop offset="1" stop-color="#a8d0e6"/></linearGradient></defs><ellipse cx="7.5" cy="6.3" rx="6.6" ry="5.4" fill="url(#gbub0)" stroke="#7aa8c4" stroke-width="1"/><path d="M5 10.8 L5.8 15 L9.6 11.4Z" fill="#c4e0f0" stroke="#7aa8c4" stroke-width=".9"/><path d="M5.6 10.6 L9 10.9" stroke="#c4e0f0" stroke-width="1.4"/></svg>
<div style="left:365px;top:404px;width:394px;height:226px;background:#333;overflow:hidden"></div>
<div style="left:365px;top:404px;width:394px;height:35px;background:#6d6d6d;border-top:1px solid #8a8a8a"></div>
<div style="left:365px;top:439px;width:394px;height:7px;background:#585858;border-top:1px solid #4a4a4a"></div>
<div style="left:365px;top:404px;width:21px;height:35px;background:linear-gradient(90deg,#7a7a7a,#666);border-right:1px solid #4c4c4c;border-top:1px solid #999"></div>
<svg style="left:372px;top:421px" width="6" height="8"><path d="M0.5 0 L5 4 L0.5 8Z" fill="#000"/></svg>
<div style="left:390px;top:407px;width:1px;height:30px;background:#444"></div>
<div style="left:391px;top:407px;width:1px;height:30px;background:#888"></div>
<div style="left:393px;top:407px;width:1px;height:30px;background:#444"></div>
<div style="left:394px;top:407px;width:1px;height:30px;background:#888"></div>
<div class="s o" style="left:398px;top:405.5px;letter-spacing:-1.4px">線のスタイル:</div>
<div style="left:398px;top:421px;width:176px;height:16px;background:#fff;border-radius:2px"></div>
<div style="left:407px;top:428px;width:146px;height:2px;background:#9a9a9a"></div>
<div style="left:566px;top:422px;width:8px;height:14px;background:#dcdcdc;border-left:1px solid #bbb"></div>
<svg style="left:566px;top:422px" width="8" height="14"><path d="M1 5 L7 5 L4 9Z" fill="#111"/></svg>
<div class="s o" style="left:582px;top:406.5px;">幅:</div>
<div style="left:582px;top:419px;width:70px;height:22px;background:#545454;border-top:1px solid #404040;border-left:1px solid #404040"></div>
<div style="left:583px;top:437px;width:69px;height:4px;background:#6f6f6f;border-top:1px solid #5e5e5e"></div>
<div class="s" style="left:585px;top:420px;font-size:9.5px;line-height:12px;color:#fff;letter-spacing:0.2px">4.00</div>
<div style="left:628px;top:421.3px;width:11px;height:7px;background:#dedede;border:1px solid #f4f4f4;border-right-color:#9a9a9a;border-bottom-color:#9a9a9a"></div>
<div style="left:628px;top:429.3px;width:11px;height:7px;background:#dedede;border:1px solid #f4f4f4;border-right-color:#9a9a9a;border-bottom-color:#9a9a9a"></div>
<svg style="left:628px;top:421.3px" width="11" height="15"><path d="M2.5 5 L5.5 1.8 L8.5 5Z M2.5 10 L5.5 13.2 L8.5 10Z" fill="#4060c4"/></svg>
<div style="left:640.3px;top:421.0px;width:11px;height:15.3px;background:#e9e9e9;border:1px solid #fafafa;border-right-color:#aaa;border-bottom-color:#aaa"></div>
<svg style="left:640.3px;top:421.3px" width="11" height="15"><path d="M1.5 6.5 L9.5 6.5 L5.5 11Z" fill="#000"/></svg>
<div style="left:665px;top:425px;width:12px;height:12px;background:linear-gradient(135deg,#dfe3ea,#fff);border:1px solid #9aa3b8"></div>
<svg style="left:665px;top:425px" width="12" height="12"><path d="M2.6 5.5 L5 9 L9.4 2.6" fill="none" stroke="#2a4fb0" stroke-width="1.8"/></svg>
<div class="s o" style="left:680px;top:424.5px;letter-spacing:-2.2px">アンチエイリアス</div>
<div style="left:510px;top:446px;width:249px;height:184px;background:#6a6a6a"></div>
<div style="left:714px;top:446px;width:5px;height:184px;background:#5e5e5e"></div>
<div style="left:510px;top:446px;width:249px;height:5px;background:#5a5a5a"></div>
<div style="left:516px;top:451px;width:198px;height:21px;background:linear-gradient(#a8a8a8,#767676);border-radius:4px 4px 0 0;border:1px solid #b0b0b0;border-bottom:1px solid #4a4a4a"></div>
<div class="t" style="left:521px;top:451px;font-size:12.5px;font-weight:bold;line-height:21px;color:#e8ecf6;letter-spacing:-0.6px">マテリアル</div>
<svg style="left:650px;top:455px" width="62" height="14"><path d="M3.5 2.5 L7.5 2.5 M4.5 2.5 L4.5 7 M6.5 2.5 L6.5 7 M2.5 7.5 L8.5 7.5 M5.5 7.5 L5.5 11.5" stroke="#eee" stroke-width="1.2" fill="none"/><path d="M20 10.5 L25 10.5" stroke="#eee" stroke-width="1.6"/><rect x="35.5" y="3.5" width="8" height="8" fill="none" stroke="#eee" stroke-width="1.4"/><path d="M53.5 3.5 L60 10.5 M60 3.5 L53.5 10.5" stroke="#eee" stroke-width="1.8"/></svg>
<div style="left:516px;top:472px;width:198px;height:158px;background:#727272;border-left:1px solid #868686;border-right:1px solid #4c4c4c"></div>
<div style="left:517px;top:472px;width:196px;height:28px;background:#6e6e6e"></div>
<div style="left:520px;top:475px;width:22.5px;height:25px;background:#595959;border-radius:6px 6px 0 0;border:1px solid #4a4a4a;border-bottom:0"></div>
<div style="left:543px;top:475px;width:22.5px;height:25px;background:#727272;border-radius:6px 6px 0 0;border:1px solid #8a8a8a;border-bottom:0"></div>
<div style="left:566px;top:475px;width:22.5px;height:25px;background:#595959;border-radius:6px 6px 0 0;border:1px solid #4a4a4a;border-bottom:0"></div>
<div style="left:525px;top:481px;width:11px;height:11px;background:linear-gradient(135deg,#222 20%,#c22 70%,#fbb);border:1.5px solid;border-color:#e0e #3c3 #36f #fd0"></div>
<div style="left:547px;top:481px;width:13px;height:11px;background:linear-gradient(90deg,#000 8%,rgba(0,0,0,0) 35%,rgba(255,255,255,0) 70%,#fff 100%),linear-gradient(#f00,#ff0,#0f0,#0ff,#00f,#f0f)"></div>
<svg style="left:569px;top:481px" width="14" height="13"><rect x="0.0" y="0.0" width="2.4" height="2.2" fill="#800"/><rect x="3.6" y="0.0" width="2.4" height="2.2" fill="#ffc"/><rect x="7.2" y="0.0" width="2.4" height="2.2" fill="#f00"/><rect x="10.8" y="0.0" width="2.4" height="2.2" fill="#0f0"/><rect x="0.0" y="3.4" width="2.4" height="2.2" fill="#ff0"/><rect x="3.6" y="3.4" width="2.4" height="2.2" fill="#488"/><rect x="7.2" y="3.4" width="2.4" height="2.2" fill="#8ff"/><rect x="10.8" y="3.4" width="2.4" height="2.2" fill="#fff"/><rect x="0.0" y="6.8" width="2.4" height="2.2" fill="#f8f"/><rect x="3.6" y="6.8" width="2.4" height="2.2" fill="#00f"/><rect x="7.2" y="6.8" width="2.4" height="2.2" fill="#88f"/><rect x="10.8" y="6.8" width="2.4" height="2.2" fill="#080"/><rect x="0.0" y="10.2" width="2.4" height="2.2" fill="#ff8"/><rect x="3.6" y="10.2" width="2.4" height="2.2" fill="#22f"/><rect x="7.2" y="10.2" width="2.4" height="2.2" fill="#f0a"/><rect x="10.8" y="10.2" width="2.4" height="2.2" fill="#fff"/></svg>
<div style="left:516.5px;top:500.5px;width:87.5px;height:115px;background:#636363;border:1px solid #8c8c8c"></div>
<div style="left:520px;top:504px;width:80px;height:100px;background:linear-gradient(to right,#000 0%,rgba(0,0,0,0) 50%,rgba(255,255,255,0) 50%,#fff 100%),linear-gradient(to bottom,#f00 0%,#ff0 16.7%,#0f0 33.3%,#0ff 50%,#00f 66.7%,#f0f 83.3%,#f00 100%)"></div>
<div style="left:520.0px;top:604px;width:16.3px;height:8.5px;background:#000"></div>
<div style="left:536.3px;top:604px;width:16.3px;height:8.5px;background:#404040"></div>
<div style="left:552.6px;top:604px;width:16.3px;height:8.5px;background:#808080"></div>
<div style="left:568.9px;top:604px;width:16.3px;height:8.5px;background:#c0c0c0"></div>
<div style="left:585.2px;top:604px;width:16px;height:8.5px;background:#fff"></div>
<div style="left:609px;top:484px;width:66px;height:40px;background:#000;border:1px solid #555"></div>
<div style="left:609px;top:523px;width:22px;height:17.5px;background:#6a6a6a;border:1px solid #444;border-top-color:#555"></div>
<div style="left:631px;top:523px;width:22px;height:17.5px;background:#6a6a6a;border:1px solid #444;border-top-color:#555"></div>
<div style="left:653px;top:523px;width:21.6px;height:17.5px;background:#6a6a6a;border:1px solid #444;border-top-color:#555"></div>
<svg style="left:609px;top:523px" width="66" height="18"><circle cx="10.5" cy="9" r="5.3" fill="#000"/><path d="M18 16 L21 16 L21 13Z" fill="#000"/><circle cx="32.5" cy="9" r="4.6" fill="#222" stroke="#ddd" stroke-width="1.4" stroke-dasharray="1.5 1.2"/><path d="M30 7 L35 11 M35 7 L30 11" stroke="#eee" stroke-width="1" /><circle cx="54.5" cy="9" r="4" fill="none" stroke="#000" stroke-width="1.4"/><path d="M51.7 6.2 L57.3 11.8" stroke="#000" stroke-width="1.4"/></svg>
<div style="left:646px;top:528px;width:66px;height:39px;background:#c8a080;border:1px solid #777"></div>
<div style="left:646px;top:567px;width:22px;height:17.5px;background:#6a6a6a;border:1px solid #444;border-top-color:#555"></div>
<div style="left:668px;top:567px;width:22px;height:17.5px;background:#6a6a6a;border:1px solid #444;border-top-color:#555"></div>
<div style="left:690px;top:567px;width:21.6px;height:17.5px;background:#6a6a6a;border:1px solid #444;border-top-color:#555"></div>
<svg style="left:646px;top:567px" width="66" height="18"><circle cx="10.5" cy="9" r="5.3" fill="#000"/><path d="M18 16 L21 16 L21 13Z" fill="#000"/><circle cx="32.5" cy="9" r="4.6" fill="#222" stroke="#ddd" stroke-width="1.4" stroke-dasharray="1.5 1.2"/><path d="M30 7 L35 11 M35 7 L30 11" stroke="#eee" stroke-width="1" /><circle cx="54.5" cy="9" r="4" fill="none" stroke="#000" stroke-width="1.4"/><path d="M51.7 6.2 L57.3 11.8" stroke="#000" stroke-width="1.4"/></svg>
<div style="left:609px;top:523px;width:22px;height:17.5px;background:#6a6a6a;border:1px solid #444;border-top-color:#555"></div>
<div style="left:631px;top:523px;width:22px;height:17.5px;background:#6a6a6a;border:1px solid #444;border-top-color:#555"></div>
<div style="left:653px;top:523px;width:21.6px;height:17.5px;background:#6a6a6a;border:1px solid #444;border-top-color:#555"></div>
<svg style="left:609px;top:523px" width="66" height="18"><circle cx="10.5" cy="9" r="5.3" fill="#000"/><path d="M18 16 L21 16 L21 13Z" fill="#000"/><circle cx="32.5" cy="9" r="4.6" fill="#222" stroke="#ddd" stroke-width="1.4" stroke-dasharray="1.5 1.2"/><path d="M30 7 L35 11 M35 7 L30 11" stroke="#eee" stroke-width="1" /><circle cx="54.5" cy="9" r="4" fill="none" stroke="#000" stroke-width="1.4"/><path d="M51.7 6.2 L57.3 11.8" stroke="#000" stroke-width="1.4"/></svg>
<div style="left:609px;top:484px;width:66.5px;height:39.5px;background:#000;border:1px solid #505050"></div>
<div style="left:692.5px;top:502.5px;width:20px;height:17px;background:#c8a080;border:1px solid #8a8a8a"></div>
<div style="left:680px;top:488px;width:21px;height:17px;background:#000;border:1px solid #555"></div>
<svg style="left:680.5px;top:509px" width="9.02" height="9.02" viewBox="0 0 11 11"><path d="M2.8 2 Q3 7.5 8.5 8" fill="none" stroke="#f0f0f0" stroke-width="1.4"/><path d="M0.3 3.6 L2.6 0.2 L5.2 3.4Z M7.4 5.4 L10.8 8 L7.4 10.6Z" fill="#f0f0f0"/></svg>
<svg style="left:628px;top:548.5px" width="11.55" height="11.55" viewBox="0 0 11 11"><path d="M2.8 2 Q3 7.5 8.5 8" fill="none" stroke="#f0f0f0" stroke-width="1.4"/><path d="M0.3 3.6 L2.6 0.2 L5.2 3.4Z M7.4 5.4 L10.8 8 L7.4 10.6Z" fill="#f0f0f0"/></svg>
<div style="left:610px;top:568px;width:13px;height:12px;background:linear-gradient(135deg,#000 50%,#fff 50%);border:1px solid #ddd"></div>
<div style="left:610px;top:591px;width:11px;height:11px;background:#fff;border:1px solid #8a93a8"></div>
<svg style="left:610px;top:591px" width="11" height="11"><path d="M2.3 5 L4.5 8.2 L8.7 2.3" fill="none" stroke="#2a4fb0" stroke-width="1.7"/></svg>
<div class="s" style="left:626px;top:590px;letter-spacing:-1.2px">すべてのツール</div>
<div style="left:511px;top:626px;width:203px;height:1px;background:#8a8a8a"></div>
<div style="left:719px;top:451px;width:40px;height:21px;background:linear-gradient(#a8a8a8,#767676);border-radius:4px 0 0 0;border:1px solid #b0b0b0;border-right:0;border-bottom:1px solid #4a4a4a"></div>
<div class="t" style="left:722px;top:451px;font-size:12.5px;font-weight:bold;line-height:21px;color:#e8ecf6">履歴</div>
<div style="left:719px;top:472px;width:40px;height:158px;background:#585858;border-left:1px solid #868686"></div>
<div style="left:720px;top:472px;width:39px;height:26px;background:#707070"></div>
<div style="left:724px;top:477px;width:16.5px;height:16.5px;background:#8e8e8e"></div>
<svg style="left:724px;top:477px" width="17" height="17"><path d="M6.5 2.2 Q2.2 2.5 2.6 6.5 Q3 10.3 7.5 10.3" fill="none" stroke="#2c2c2c" stroke-width="1.2"/><path d="M6.5 7.6 L9.8 10.3 L6.5 13Z" fill="#2c2c2c"/><rect x="11.3" y="1.8" width="3.4" height="3.4" fill="#d83030" stroke="#555" stroke-width=".7"/><rect x="11.3" y="6.8" width="3.4" height="3.4" fill="#bbb" stroke="#444" stroke-width=".7"/><rect x="11.3" y="11.8" width="3.4" height="3.4" fill="#d83030" stroke="#555" stroke-width=".7"/></svg>
<div style="left:748px;top:477px;width:11px;height:16.5px;background:#8e8e8e"></div>
<svg style="left:748px;top:477px" width="11" height="17"><path d="M7.5 14.5 Q1.5 14 2 9.5 Q2.5 6 8.5 6" fill="none" stroke="#2c2c2c" stroke-width="1.2"/><path d="M7 2.8 L10.8 6 L7 9.2" fill="none" stroke="#2c2c2c" stroke-width="1.2"/></svg>
<div style="left:720px;top:497px;width:39px;height:1px;background:#8a8a8a"></div>
<div style="left:722px;top:499.3px;width:17px;height:17.5px;background:#787878;border-top:1px solid #666"></div>
<div style="left:739px;top:499.3px;width:1px;height:17.5px;background:#e8e8e8"></div>
<div style="left:740px;top:499.3px;width:19px;height:17.5px;background:#7b7b7b;border-top:1px solid #666"></div>
<svg style="left:723.3px;top:503.8px" width="14" height="10"><path d="M0.5 5 Q7 -1.5 13.5 5 Q7 10.5 0.5 5Z" fill="#fff" stroke="#000" stroke-width="1"/><circle cx="7" cy="4.9" r="2.7" fill="#000"/><path d="M1 3 Q7 -2.6 13 3" stroke="#000" stroke-width="1.5" fill="none"/></svg>
<svg style="left:742px;top:500.8px" width="17" height="15"><path d="M2.5 15 L2.5 6 Q2.5 2.5 6 2.5 L17 2.5" fill="none" stroke="#d4d4d4" stroke-width="3.4"/><path d="M2.5 15 L2.5 6 Q2.5 2.5 6 2.5 L17 2.5" fill="none" stroke="#8a8a8a" stroke-width=".9"/><rect x="8" y="8" width="9" height="8" fill="#9090f8"/></svg>
<div style="left:722px;top:516.8px;width:17px;height:17.5px;background:#787878;border-top:1px solid #666"></div>
<div style="left:739px;top:516.8px;width:1px;height:17.5px;background:#e8e8e8"></div>
<div style="left:740px;top:516.8px;width:19px;height:17.5px;background:#7b7b7b;border-top:1px solid #666"></div>
<svg style="left:723.3px;top:521.3px" width="14" height="10"><path d="M0.5 5 Q7 -1.5 13.5 5 Q7 10.5 0.5 5Z" fill="#fff" stroke="#000" stroke-width="1"/><circle cx="7" cy="4.9" r="2.7" fill="#000"/><path d="M1 3 Q7 -2.6 13 3" stroke="#000" stroke-width="1.5" fill="none"/></svg>
<svg style="left:742px;top:518.3px" width="17" height="15"><path d="M2.5 15 L2.5 6 Q2.5 2.5 6 2.5 L17 2.5" fill="none" stroke="#d4d4d4" stroke-width="3.4"/><path d="M2.5 15 L2.5 6 Q2.5 2.5 6 2.5 L17 2.5" fill="none" stroke="#8a8a8a" stroke-width=".9"/><rect x="8" y="8" width="9" height="8" fill="#9090f8"/></svg>
<div style="left:722px;top:534.3px;width:17px;height:17.5px;background:#787878;border-top:1px solid #666"></div>
<div style="left:739px;top:534.3px;width:1px;height:17.5px;background:#e8e8e8"></div>
<div style="left:740px;top:534.3px;width:19px;height:17.5px;background:#7b7b7b;border-top:1px solid #666"></div>
<svg style="left:723.3px;top:538.8px" width="14" height="10"><path d="M0.5 5 Q7 -1.5 13.5 5 Q7 10.5 0.5 5Z" fill="#fff" stroke="#000" stroke-width="1"/><circle cx="7" cy="4.9" r="2.7" fill="#000"/><path d="M1 3 Q7 -2.6 13 3" stroke="#000" stroke-width="1.5" fill="none"/></svg>
<svg style="left:742px;top:535.3px" width="16" height="16"><defs><linearGradient id="gbub275" x1="0" y1="0" x2="0" y2="1"><stop offset="0" stop-color="#fff"/><stop offset="1" stop-color="#a8d0e6"/></linearGradient></defs><ellipse cx="7.5" cy="6.3" rx="6.6" ry="5.4" fill="url(#gbub275)" stroke="#7aa8c4" stroke-width="1"/><path d="M5 10.8 L5.8 15 L9.6 11.4Z" fill="#c4e0f0" stroke="#7aa8c4" stroke-width=".9"/><path d="M5.6 10.6 L9 10.9" stroke="#c4e0f0" stroke-width="1.4"/></svg>
<div style="left:0px;top:630px;width:770px;height:70px;background:#fff"></div>
<div style="left:140px;top:191px;width:245px;height:169px;border:3px solid #fe0000;background:transparent"></div>
<div style="left:140px;top:394px;width:245px;height:170px;border:3px solid #fe0000;background:transparent"></div>
<div style="left:576px;top:129.7px;width:66px;height:40.6px;border:3px solid #fe0000;background:transparent"></div>
<div style="left:576px;top:404.7px;width:66px;height:41px;border:3px solid #fe0000;background:transparent"></div>
<div style="left:600px;top:201px;width:123px;height:119px;border:3px solid #fe0000;background:transparent"></div>
<div style="left:600px;top:476px;width:123px;height:119px;border:3px solid #fe0000;background:transparent"></div>
<div style="left:540px;top:147px;width:38px;height:3px;background:#fe0000"></div>
<div style="left:540px;top:147px;width:3px;height:283px;background:#fe0000"></div>
<div style="left:540px;top:426px;width:28px;height:3.5px;background:#fe0000"></div>
<svg style="left:564px;top:419px" width="13" height="17"><path d="M0 0 L12 8.2 L0 16.5Z" fill="#fe0000"/></svg>
<div style="left:679px;top:318px;width:3.3px;height:152px;background:#fe0000"></div>
<svg style="left:672px;top:466px" width="18" height="12"><path d="M0 0 L17 0 L8.5 11Z" fill="#fe0000"/></svg>
<div style="left:73.5px;top:603px;width:675.5px;height:87.5px;border:3.3px solid #fe0000;background:#fff"></div>
<div class="cap" style="left:80px;top:612.9px">「ツールオプション」パレットの「幅」や「マテリアルパレット」の「前景のプロパティ」<br>（枠線の色）や「背景のプロパティ」（塗りの色）を変更すると図形が線幅や色が変更され<br>ます。</div>
</div></body></html>
